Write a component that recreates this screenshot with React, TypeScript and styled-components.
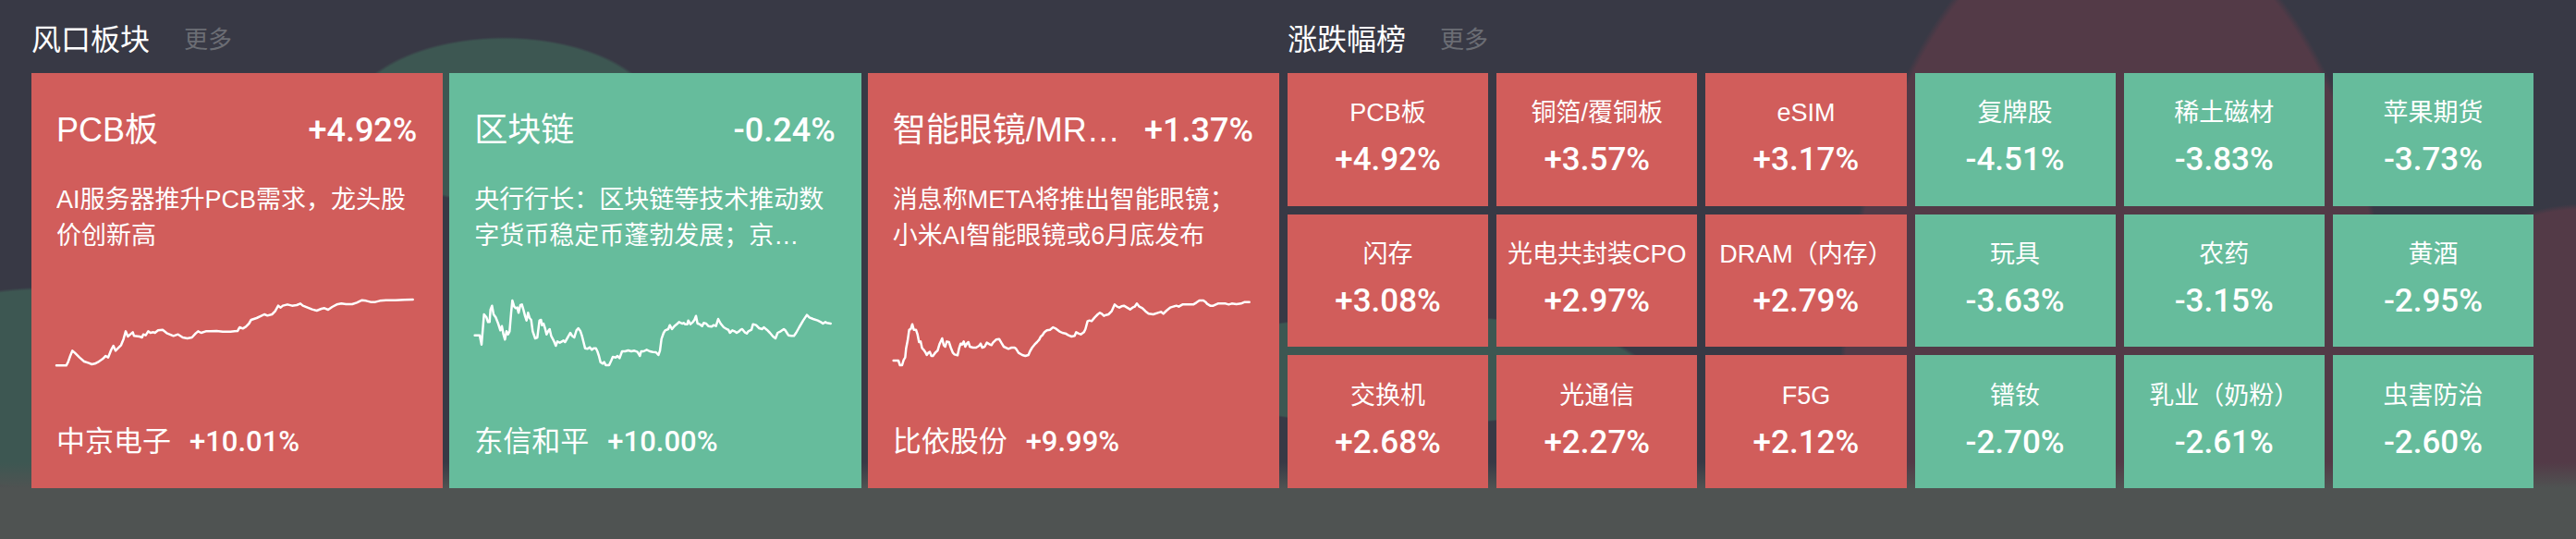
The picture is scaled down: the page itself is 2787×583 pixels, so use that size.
import React from 'react';
import styled, { createGlobalStyle } from 'styled-components';

const UP = '#d15d5b';
const DOWN = '#66bc9c';

const GlobalStyle = createGlobalStyle`
  html, body {
    margin: 0;
    padding: 0;
  }
  body {
    width: 2787px;
    height: 583px;
    overflow: hidden;
    color: #ffffff;
    font-family: "Liberation Sans", "Noto Sans CJK SC", sans-serif;
    background-color: #383945;
    background-image:
      linear-gradient(to bottom, rgba(79, 83, 82, 0) 0, rgba(79, 83, 82, 0) 500px, #4f5352 528px),
      radial-gradient(ellipse 300px 532px at 2290px 426px, #533a47 98%, rgba(83, 58, 71, 0) 100%),
      radial-gradient(ellipse 260px 300px at 2800px 520px, #533a47 98%, rgba(83, 58, 71, 0) 100%),
      radial-gradient(ellipse 170px 90px at 545px 130px, #3d5752 97%, rgba(61, 87, 82, 0) 100%),
      radial-gradient(ellipse 240px 110px at 60px 420px, #3d5752 97%, rgba(61, 87, 82, 0) 100%),
      radial-gradient(ellipse 260px 60px at 1520px 400px, #3d5752 97%, rgba(61, 87, 82, 0) 100%);
  }
`;

const Page = styled.div`
  display: flex;
  gap: 9px;
  padding: 0 46px 0 34px;
  box-sizing: border-box;
  width: 2787px;
`;

const Section = styled.section<{ $width?: number }>`
  display: flex;
  flex-direction: column;
  flex: ${(p) => (p.$width ? `0 0 ${p.$width}px` : '1 1 auto')};
  min-width: 0;
`;

const SectionHeader = styled.div`
  height: 79px;
  padding-top: 7px;
  box-sizing: border-box;
  display: flex;
  align-items: center;
  gap: 37px;
`;

const SectionTitle = styled.h2`
  margin: 0;
  font-size: 32px;
  font-weight: 400;
  line-height: 46px;
  color: #ffffff;
`;

const MoreLink = styled.span`
  font-size: 26px;
  line-height: 46px;
  color: #6b6d74;
`;

const CardGrid = styled.div`
  display: grid;
  grid-template-columns: repeat(3, 1fr);
  gap: 7px;
  height: 449px;
`;

const Card = styled.div<{ $up: boolean }>`
  background: ${(p) => (p.$up ? UP : DOWN)};
  padding: 40px 28px 0 27px;
  box-sizing: border-box;
  display: flex;
  flex-direction: column;
  overflow: hidden;
`;

const CardHead = styled.div`
  display: flex;
  align-items: center;
  gap: 20px;
  height: 44px;
`;

const CardName = styled.div`
  flex: 1 1 auto;
  min-width: 0;
  font-size: 36px;
  line-height: 44px;
  white-space: nowrap;
  overflow: hidden;
  text-overflow: ellipsis;
`;

const Pct = styled.span<{ $size: number }>`
  font-family: Roboto, "Liberation Sans", sans-serif;
  font-weight: 500;
  font-size: ${(p) => p.$size}px;
  white-space: nowrap;
`;

const CardDesc = styled.div`
  margin-top: 34px;
  font-size: 27px;
  line-height: 39px;
  height: 78px;
  display: -webkit-box;
  -webkit-line-clamp: 2;
  -webkit-box-orient: vertical;
  overflow: hidden;
`;

const Chart = styled.svg`
  display: block;
  margin-top: 48px;
  width: 387px;
  height: 73px;
  overflow: visible;
`;

const CardFoot = styled.div`
  margin-top: 62px;
  display: flex;
  align-items: baseline;
  gap: 20px;
  line-height: 40px;
`;

const FootName = styled.span`
  font-size: 31px;
`;

const TileGrid = styled.div`
  display: grid;
  grid-template-columns: repeat(6, 1fr);
  grid-template-rows: repeat(3, 1fr);
  gap: 9px;
  height: 449px;
`;

const Tile = styled.div<{ $up: boolean }>`
  background: ${(p) => (p.$up ? UP : DOWN)};
  display: flex;
  flex-direction: column;
  align-items: center;
  justify-content: center;
  padding-bottom: 2px;
  box-sizing: border-box;
`;

const TileName = styled.div`
  font-size: 27px;
  line-height: 36px;
  white-space: nowrap;
`;

const TilePct = styled(Pct)`
  margin-top: 11px;
  line-height: 44px;
`;

type Pt = [number, number];

const line1: Pt[] = [
  [80, 316], [112, 316], [118, 305], [125, 285], [132, 268], [140, 275], [155, 290], [170, 303],
  [185, 308], [195, 312], [205, 310], [215, 305], [230, 295], [240, 285], [248, 290], [258, 265],
  [265, 252], [272, 268], [280, 260], [290, 250], [298, 230], [305, 205], [312, 222], [320, 215],
  [328, 208], [332, 220], [350, 222], [358, 225], [362, 215], [370, 218], [378, 205], [385, 210],
  [395, 208], [400, 210], [410, 202], [425, 200], [440, 212], [460, 220], [475, 215], [490, 225],
  [505, 228], [520, 225], [532, 212], [540, 205], [550, 210], [565, 205], [580, 205], [600, 204],
  [620, 206], [645, 206], [668, 204], [675, 192], [685, 196], [695, 190], [705, 180], [712, 168],
  [730, 162], [745, 155], [755, 150], [765, 154], [780, 150], [790, 140], [800, 122], [808, 128],
  [815, 122], [830, 118], [845, 122], [860, 120], [872, 115], [880, 122], [895, 128], [910, 134],
  [925, 138], [940, 132], [950, 130], [962, 135], [975, 126], [990, 118], [1005, 115], [1020, 117],
  [1040, 117], [1055, 112], [1072, 104], [1085, 106], [1100, 110], [1115, 110], [1130, 106],
  [1150, 104], [1180, 104], [1210, 103], [1237, 102],
];

const line2: Pt[] = [
  [82, 248], [98, 248], [104, 278], [112, 180], [120, 190], [125, 205], [130, 205], [133, 165],
  [138, 152], [143, 180], [150, 190], [158, 210], [165, 232], [170, 218], [175, 245], [180, 262],
  [185, 235], [190, 245], [195, 235], [200, 175], [204, 135], [210, 155], [215, 160], [220, 158],
  [224, 175], [230, 150], [235, 148], [240, 165], [245, 185], [250, 200], [255, 175], [260, 192],
  [265, 198], [270, 235], [278, 258], [285, 255], [292, 200], [297, 198], [300, 215], [305, 210],
  [310, 225], [315, 245], [320, 235], [325, 228], [330, 250], [338, 265], [345, 282], [350, 268],
  [358, 272], [365, 268], [370, 265], [375, 270], [382, 258], [392, 240], [398, 250], [405, 255],
  [412, 232], [418, 225], [425, 235], [430, 250], [435, 270], [440, 290], [448, 292], [455, 287],
  [462, 295], [468, 290], [475, 290], [480, 300], [485, 315], [490, 335], [497, 340], [502, 335],
  [507, 345], [518, 345], [525, 330], [530, 318], [540, 320], [545, 315], [552, 322], [560, 300],
  [570, 300], [580, 297], [590, 300], [600, 298], [610, 302], [618, 315], [622, 300], [630, 300],
  [640, 295], [650, 300], [660, 302], [670, 303], [678, 312], [683, 298], [688, 260], [695, 240],
  [700, 232], [710, 228], [715, 215], [722, 228], [730, 218], [740, 210], [745, 205], [755, 210],
  [760, 208], [765, 212], [772, 212], [775, 200], [782, 212], [790, 205], [795, 198], [800, 185],
  [805, 210], [812, 212], [820, 218], [825, 208], [833, 210], [840, 218], [850, 220], [858, 215],
  [865, 218], [872, 195], [880, 210], [890, 222], [900, 228], [905, 230], [910, 240], [918, 232],
  [925, 235], [932, 240], [940, 235], [945, 230], [950, 228], [958, 238], [965, 242], [970, 235],
  [980, 230], [985, 212], [995, 215], [1005, 225], [1015, 228], [1020, 222], [1030, 230],
  [1040, 240], [1050, 252], [1058, 258], [1065, 240], [1075, 235], [1085, 228], [1090, 232],
  [1095, 240], [1100, 248], [1110, 250], [1118, 250], [1125, 240], [1135, 222], [1148, 200],
  [1160, 182], [1168, 190], [1180, 195], [1195, 200], [1205, 205], [1212, 210], [1220, 205],
  [1225, 208], [1237, 210],
];

const line3: Pt[] = [
  [82, 300], [98, 300], [103, 315], [110, 315], [115, 298], [120, 290], [123, 260], [128, 235],
  [133, 200], [138, 198], [143, 182], [148, 200], [155, 200], [160, 215], [165, 240], [170, 238],
  [175, 260], [180, 265], [185, 272], [190, 282], [195, 275], [200, 272], [205, 285], [210, 285],
  [215, 278], [220, 272], [225, 268], [232, 245], [240, 228], [245, 250], [250, 255], [255, 238],
  [262, 240], [268, 258], [275, 275], [280, 280], [290, 283], [295, 260], [300, 245], [305, 248],
  [310, 238], [315, 255], [320, 245], [325, 240], [330, 255], [340, 258], [350, 258], [360, 252],
  [365, 245], [370, 258], [378, 255], [385, 242], [395, 248], [400, 250], [405, 242], [415, 232],
  [425, 230], [432, 242], [440, 255], [455, 262], [465, 258], [475, 258], [480, 262], [488, 275],
  [500, 282], [510, 285], [520, 282], [525, 270], [532, 258], [540, 248], [548, 240], [555, 232],
  [560, 222], [565, 218], [572, 208], [580, 202], [590, 200], [600, 192], [610, 197], [620, 205],
  [630, 210], [640, 212], [650, 218], [660, 222], [670, 220], [675, 208], [682, 212], [690, 215],
  [700, 208], [705, 198], [712, 172], [718, 170], [725, 172], [735, 160], [745, 150], [752, 145],
  [758, 148], [765, 155], [772, 152], [780, 150], [790, 140], [800, 118], [808, 125], [815, 128],
  [822, 124], [830, 122], [840, 128], [850, 134], [858, 128], [865, 125], [872, 115], [880, 125],
  [890, 130], [900, 140], [910, 148], [925, 150], [940, 145], [950, 142], [958, 148], [968, 138],
  [980, 128], [990, 125], [1000, 122], [1008, 125], [1020, 118], [1035, 118], [1055, 118],
  [1065, 112], [1075, 105], [1088, 105], [1095, 110], [1100, 116], [1110, 122], [1120, 122],
  [1135, 115], [1150, 115], [1160, 115], [1170, 118], [1180, 115], [1195, 117], [1210, 115],
  [1222, 110], [1237, 110],
];

interface Hot {
  name: string;
  pct: string;
  desc: string;
  stock: string;
  stockPct: string;
  up: boolean;
  line: Pt[];
  top: number;
}

const hots: Hot[] = [
  {
    name: 'PCB板',
    pct: '+4.92%',
    desc: 'AI服务器推升PCB需求，龙头股价创新高',
    stock: '中京电子',
    stockPct: '+10.01%',
    up: true,
    line: line1,
    top: 99,
  },
  {
    name: '区块链',
    pct: '-0.24%',
    desc: '央行行长：区块链等技术推动数字货币稳定币蓬勃发展；京…',
    stock: '东信和平',
    stockPct: '+10.00%',
    up: false,
    line: line2,
    top: 129,
  },
  {
    name: '智能眼镜/MR眼镜',
    pct: '+1.37%',
    desc: '消息称META将推出智能眼镜；小米AI智能眼镜或6月底发布',
    stock: '比依股份',
    stockPct: '+9.99%',
    up: true,
    line: line3,
    top: 99,
  },
];

const ranks: [string, string][] = [
  ['PCB板', '+4.92%'],
  ['铜箔/覆铜板', '+3.57%'],
  ['eSIM', '+3.17%'],
  ['复牌股', '-4.51%'],
  ['稀土磁材', '-3.83%'],
  ['苹果期货', '-3.73%'],
  ['闪存', '+3.08%'],
  ['光电共封装CPO', '+2.97%'],
  ['DRAM（内存）', '+2.79%'],
  ['玩具', '-3.63%'],
  ['农药', '-3.15%'],
  ['黄酒', '-2.95%'],
  ['交换机', '+2.68%'],
  ['光通信', '+2.27%'],
  ['F5G', '+2.12%'],
  ['镨钕', '-2.70%'],
  ['乳业（奶粉）', '-2.61%'],
  ['虫害防治', '-2.60%'],
];

const Sparkline: React.FC<{ points: Pt[]; top: number }> = ({ points, top }) => (
  <Chart viewBox={`80 ${top} 1161 219`} preserveAspectRatio="none">
    <polyline
      points={points.map(([x, y]) => `${x},${y}`).join(' ')}
      fill="none"
      stroke="#ffffff"
      strokeWidth={2.5}
      strokeLinejoin="round"
      strokeLinecap="round"
      vectorEffect="non-scaling-stroke"
    />
  </Chart>
);

const App: React.FC = () => {
  return (
    <>
      <GlobalStyle />
      <Page>
        <Section $width={1350}>
          <SectionHeader>
            <SectionTitle>风口板块</SectionTitle>
            <MoreLink>更多</MoreLink>
          </SectionHeader>
          <CardGrid>
            {hots.map((h) => (
              <Card key={h.name} $up={h.up}>
                <CardHead>
                  <CardName>{h.name}</CardName>
                  <Pct $size={36}>{h.pct}</Pct>
                </CardHead>
                <CardDesc>{h.desc}</CardDesc>
                <Sparkline points={h.line} top={h.top} />
                <CardFoot>
                  <FootName>{h.stock}</FootName>
                  <Pct $size={31}>{h.stockPct}</Pct>
                </CardFoot>
              </Card>
            ))}
          </CardGrid>
        </Section>
        <Section>
          <SectionHeader>
            <SectionTitle>涨跌幅榜</SectionTitle>
            <MoreLink>更多</MoreLink>
          </SectionHeader>
          <TileGrid>
            {ranks.map(([name, pct]) => (
              <Tile key={name} $up={pct.startsWith('+')}>
                <TileName>{name}</TileName>
                <TilePct $size={35}>{pct}</TilePct>
              </Tile>
            ))}
          </TileGrid>
        </Section>
      </Page>
    </>
  );
};

export default App;
